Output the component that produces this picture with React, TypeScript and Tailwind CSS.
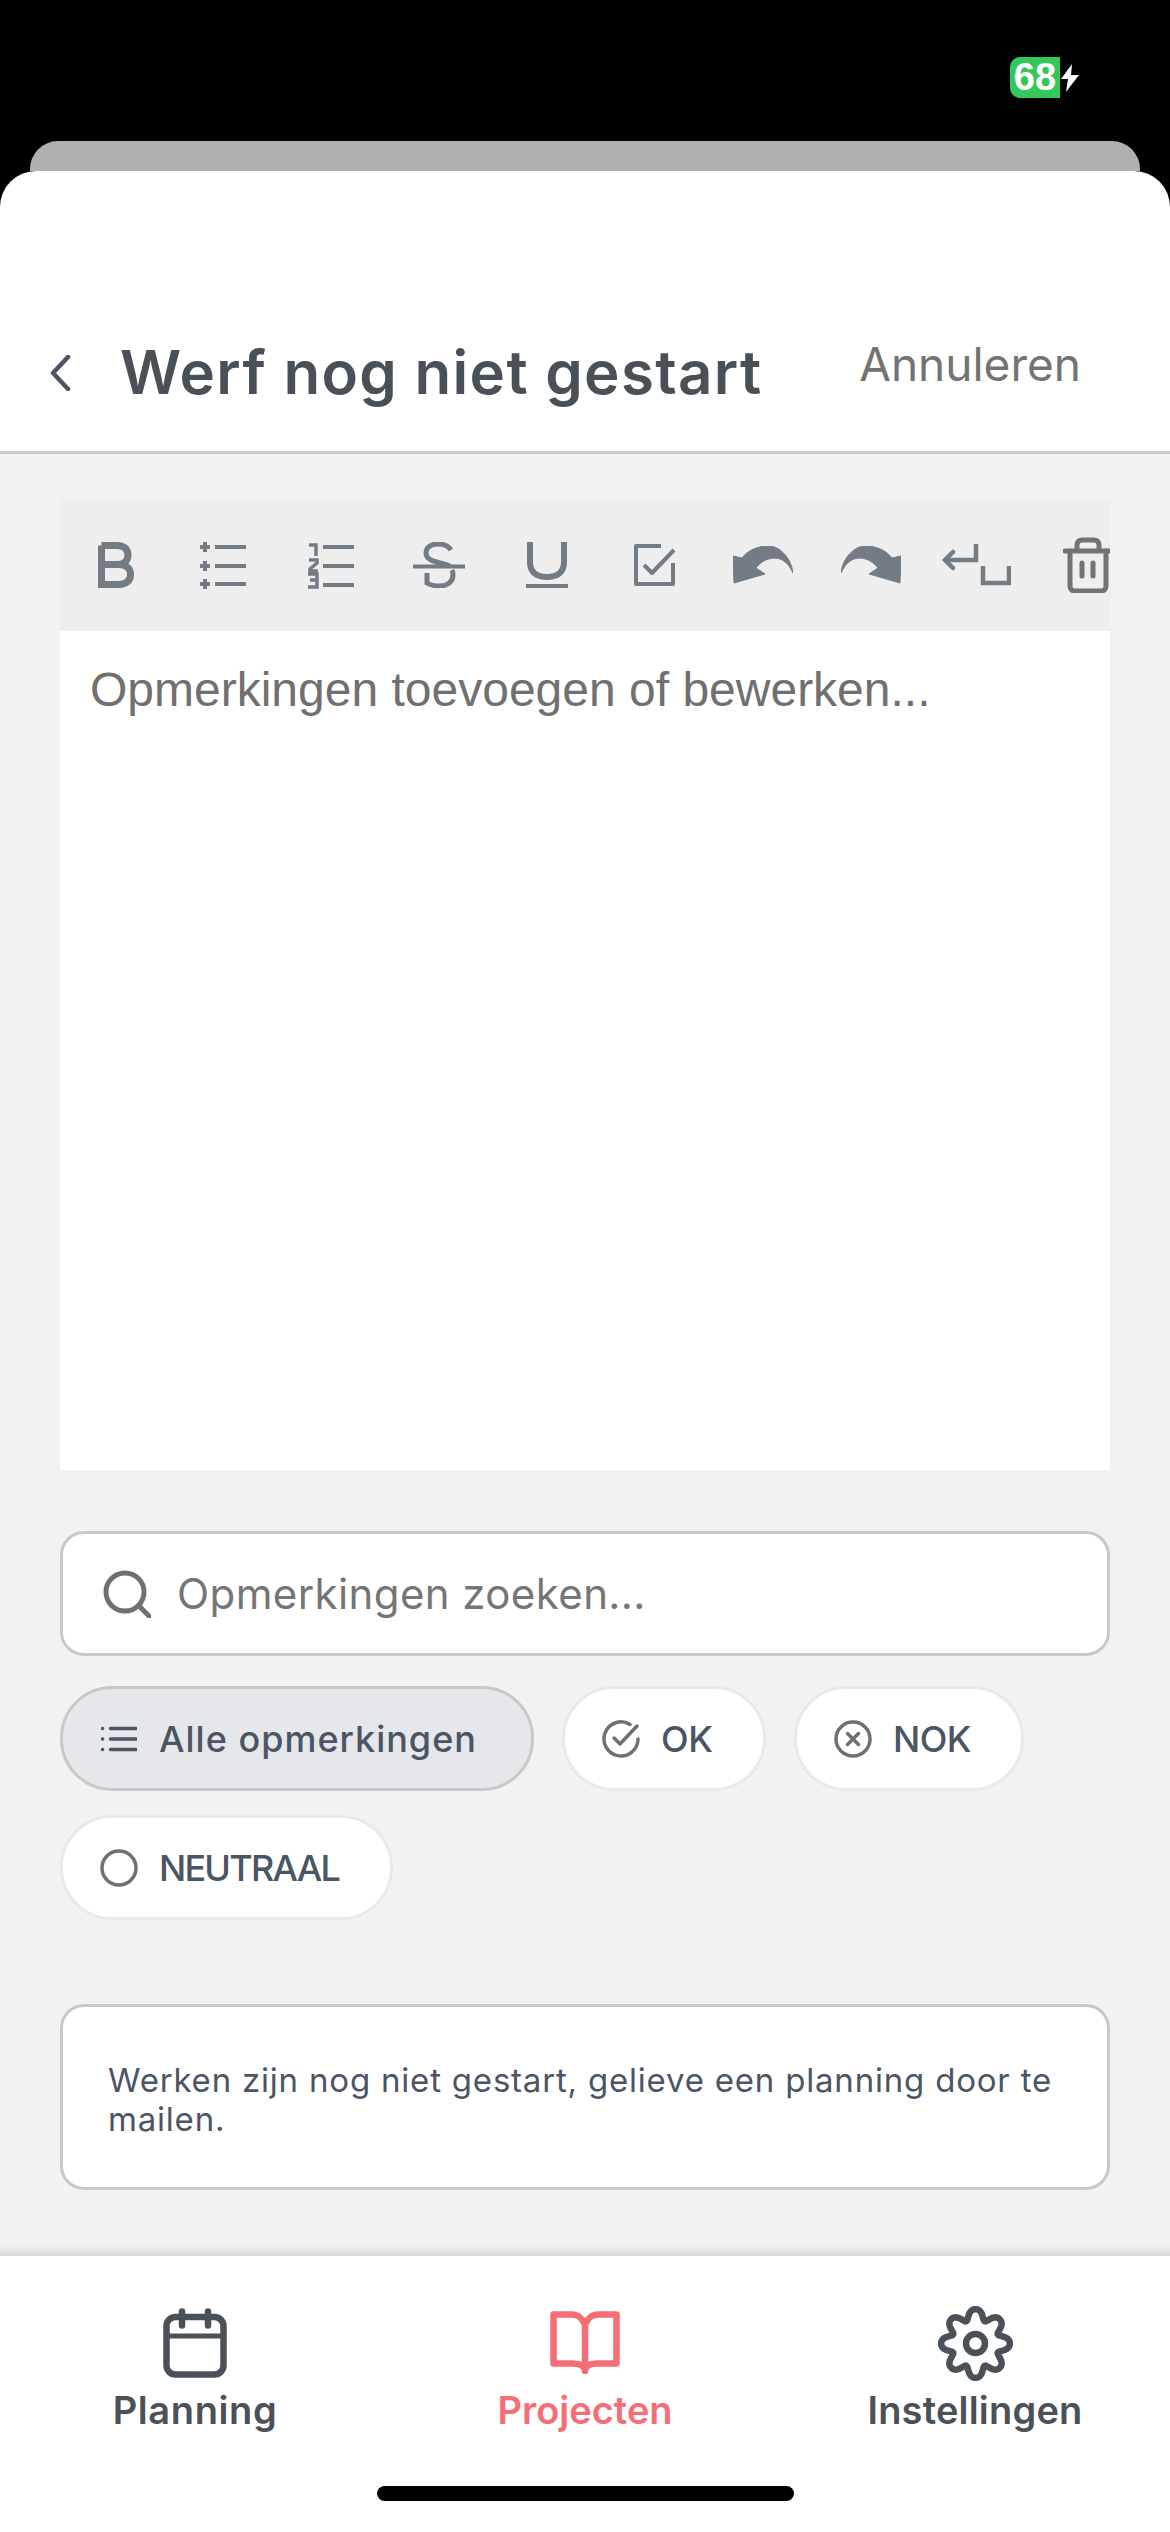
import React from 'react';

const poppinsLike = "font-['Inter','Noto_Sans',sans-serif]";

function gearPath() {
  const pts: string[] = [];
  const n = 240;
  for (let i = 0; i <= n; i++) {
    const t = (i / n) * Math.PI * 2;
    const r = 30 + 5.1 * Math.cos(8 * t) - 0.8 * Math.cos(16 * t);
    pts.push(`${(37.5 + r * Math.sin(t)).toFixed(2)} ${(37.5 - r * Math.cos(t)).toFixed(2)}`);
  }
  return 'M' + pts.join('L') + 'Z';
}

function BoldIcon() {
  return (
    <svg width="36" height="46" viewBox="0 0 36 46" fill="none" stroke="#737b84" strokeWidth="7" className="ml-[2px]">
      <path d="M3.500 3.500H19c7 0 11 3.500 11 9.500s-4 9.500-11 9.500H3.500M3.500 22.500H21c7 0 11.500 3.500 11.500 10S28 42.500 21 42.500H3.500V3.500Z" />
    </svg>
  );
}

function BulletList() {
  return (
    <svg width="46" height="47" viewBox="0 0 46 47" fill="none" stroke="#737b84" strokeWidth="4">
      {[5, 24, 42].map((y) => (
        <g key={y}>
          <path d={`M0 ${y}h10M5 ${y - 5}v10`} />
          <path d={`M15 ${y}h31`} />
        </g>
      ))}
    </svg>
  );
}

function NumberList() {
  return (
    <svg width="46" height="47" viewBox="0 0 46 47" fill="none" stroke="#737b84" strokeWidth="4">
      <path d="M1 3h7v11M1 18h8v3l-7 6v2h8M0 32h9v13H0M2 38h7" strokeWidth="3.500" />
      {[5, 24, 43].map((y) => (
        <path key={y} d={`M15 ${y}h31`} />
      ))}
    </svg>
  );
}

function StrikeIcon() {
  return (
    <svg width="52" height="46" viewBox="0 0 52 46" fill="none" stroke="#737b84" strokeWidth="5">
      <path d="M38 8C35 3 30 2 25 2c-7 0-12 3-12 9 0 9 14 9 24 13M14 31v10c4 2.500 9 3 13 3 7 0 13-4 13-11 0-2-.5-4-1-5" />
      <path d="M0 24.500h52" strokeWidth="4" />
    </svg>
  );
}

function UnderlineIcon() {
  return (
    <svg width="42" height="46" viewBox="0 0 42 46" fill="none" stroke="#737b84">
      <path d="M4 0v20c0 10 6 15 17 15s17-5 17-15V0" strokeWidth="6" />
      <path d="M0 44h42" strokeWidth="4" />
    </svg>
  );
}

function CheckboxIcon() {
  return (
    <svg width="42" height="42" viewBox="0 0 42 42" fill="none" stroke="#737b84" strokeWidth="4" strokeLinejoin="round">
      <path d="M27 2H2v38h37V19" />
      <path d="M10 21l8 8L40 6" />
    </svg>
  );
}

function UndoIcon({ flip }: { flip?: boolean }) {
  return (
    <svg width="60" height="38" viewBox="0 0 60 38" className={flip ? '-scale-x-100' : ''}>
      <path d="M0 10L1 37L32 28L23 22C30 12 50 4 60 27C58 10 45 0 36 0C25 0 15 4 9 12Z" fill="#737b84" stroke="#737b84" strokeLinejoin="round" />
    </svg>
  );
}

function ReturnIcon() {
  return (
    <svg width="69" height="42" viewBox="0 0 69 42" fill="none" stroke="#737b84" strokeWidth="4.500" className="-ml-[6px]">
      <path d="M34 0v16H3" />
      <path d="M11 8l-8 8 8 8" strokeLinecap="round" />
      <path d="M41 22v17h26V22" />
    </svg>
  );
}

function TrashIcon() {
  return (
    <svg width="49" height="56" viewBox="0 0 49 56" fill="none" stroke="#737373" strokeWidth="5" strokeLinecap="round" strokeLinejoin="round">
      <path d="M2 14h46" />
      <path d="M14 13V8c0-3 2-5 5-5h12c3 0 5 2 5 5v5" />
      <path d="M7 14v35c0 3 2 5 5 5h26c3 0 5-2 5-5V14" />
      <path d="M19 26v13M30 26v13" />
    </svg>
  );
}

function Tool({ children }: { children: React.ReactNode }) {
  return <div className="w-[108px] shrink-0 flex items-center justify-center">{children}</div>;
}

function Chip({ active, icon, label, className, labelClass }: { active?: boolean; icon: React.ReactNode; label: string; className: string; labelClass: string }) {
  return (
    <div
      className={`h-[105px] rounded-[52px] border-[3px] flex items-center pl-[37px] ${className} ${
        active ? 'bg-[#e5e7eb] border-[#c8c8c8]' : 'bg-white border-[#e8e9ed]'
      }`}
    >
      <span className="w-[38px] h-[38px] shrink-0 flex items-center justify-center">{icon}</span>
      <span className={`ml-[21px] text-[36px] font-medium text-[#4b5563] whitespace-nowrap ${labelClass} ${poppinsLike}`}>{label}</span>
    </div>
  );
}

function TabItem({ icon, label, active, labelClass }: { icon: React.ReactNode; label: string; active?: boolean; labelClass?: string }) {
  return (
    <div className="w-[390px] flex flex-col items-center">
      <div className="h-[78px] flex items-center justify-center">{icon}</div>
      <span className={`mt-[3px] text-[38px] leading-[50px] font-semibold ${labelClass ?? ''} ${poppinsLike} ${active ? 'text-[#f56e75]' : 'text-[#4b5159]'}`}>{label}</span>
    </div>
  );
}

export default function App() {
  return (
    <div className="w-[1170px] h-[2532px] bg-black flex flex-col overflow-hidden">
      {/* status bar */}
      <div className="h-[141px] shrink-0 flex justify-end pt-[57px] pr-[90px]">
        <div className="flex items-start">
          <div className="w-[50px] h-[41px] bg-[#34c759] rounded-l-[10px] flex items-center justify-center text-white text-[38px] font-bold font-['Liberation_Sans',sans-serif]">68</div>
          <svg width="20" height="28" viewBox="0 0 20 28" className="mt-[7px]">
            <path d="M12 0L1 15h7L6 28l13-17h-8z" fill="#fff" />
          </svg>
        </div>
      </div>

      {/* card behind the sheet */}
      <div className="h-[30px] shrink-0 mx-[30px] bg-[#b0b0b0] rounded-t-[28px]" />

      <div className="flex-1 bg-white rounded-t-[36px] flex flex-col overflow-hidden">
        {/* header */}
        <div className="h-[283px] shrink-0 border-b-[3px] border-[#cccccc] flex items-center pt-[122px] pl-[50px] pr-[89px]">
          <svg width="22" height="36" viewBox="0 0 22 36" fill="none" stroke="#4b5563" strokeWidth="4.500" strokeLinecap="round" strokeLinejoin="round" className="mt-[2px]">
            <path d="M18 2L3 18l15 16" />
          </svg>
          <h1 className={`ml-[48px] text-[60px] font-semibold tracking-[1.3px] text-[#4a5058] whitespace-nowrap ${poppinsLike}`}>Werf nog niet gestart</h1>
          <span className={`ml-auto -mt-[16px] text-[46px] text-[#737373] ${poppinsLike}`}>Annuleren</span>
        </div>

        {/* body */}
        <div className="flex-1 bg-[#f2f2f2] px-[60px] pt-[45px] shadow-[inset_0_-12px_10px_-10px_rgba(0,0,0,0.12)]">
          <div className="h-[132px] bg-[#eeeeee] flex overflow-hidden pl-[1px]">
            <Tool><BoldIcon /></Tool>
            <Tool><BulletList /></Tool>
            <Tool><NumberList /></Tool>
            <Tool><StrikeIcon /></Tool>
            <Tool><UnderlineIcon /></Tool>
            <Tool><CheckboxIcon /></Tool>
            <Tool><UndoIcon /></Tool>
            <Tool><UndoIcon flip /></Tool>
            <Tool><ReturnIcon /></Tool>
            <Tool><TrashIcon /></Tool>
          </div>
          <div className="h-[839px] bg-white px-[30px] pt-[30px] text-[48px] leading-[57px] text-[#707070] font-['Liberation_Sans',sans-serif]">
            Opmerkingen toevoegen of bewerken...
          </div>

          {/* search */}
          <div className="mt-[61px] h-[125px] bg-white border-[3px] border-[#c8c8c8] rounded-[24px] flex items-center pl-[40px]">
            <svg width="48" height="48" viewBox="0 0 48 48" fill="none" stroke="#707070" strokeWidth="5" strokeLinecap="round">
              <circle cx="22" cy="22" r="19" />
              <path d="M36 36l10 10" />
            </svg>
            <span className={`ml-[26px] text-[42px] text-[#757575] tracking-[0.4px] ${poppinsLike}`}>Opmerkingen zoeken...</span>
          </div>

          {/* filters */}
          <div className="mt-[30px] flex flex-wrap gap-x-[28px] gap-y-[24px]">
            <Chip
              active
              className="w-[474px]"
              labelClass="tracking-[1px]"
              label="Alle opmerkingen"
              icon={
                <svg width="36" height="28" viewBox="0 0 36 28" fill="none" stroke="#4b5563" strokeWidth="3.500" strokeLinecap="round">
                  <path d="M9.500 3.500H35M9.500 14H35M9.500 24.500H35" />
                  <path d="M1.500 3.500h.1M1.500 14h.1M1.500 24.500h.1" strokeWidth="3.500" />
                </svg>
              }
            />
            <Chip
              className="w-[204px]"
              labelClass="tracking-[-0.4px] -ml-[1px]"
              label="OK"
              icon={
                <svg width="38" height="38" viewBox="0 0 38 38" fill="none" stroke="#707070" strokeWidth="3.500" strokeLinecap="round" strokeLinejoin="round">
                  <path d="M36 19a17 17 0 1 1-8-14.500" />
                  <path d="M12 18l6 6L35 6" />
                </svg>
              }
            />
            <Chip
              className="w-[230px]"
              labelClass="tracking-[-0.6px]"
              label="NOK"
              icon={
                <svg width="38" height="38" viewBox="0 0 38 38" fill="none" stroke="#707070" strokeWidth="3.500" strokeLinecap="round">
                  <circle cx="19" cy="19" r="17" />
                  <path d="M13.500 13.500l11 11M24.500 13.500l-11 11" />
                </svg>
              }
            />
            <Chip
              className="w-[333px]"
              labelClass="tracking-[-1.8px]"
              label="NEUTRAAL"
              icon={
                <svg width="38" height="38" viewBox="0 0 38 38" fill="none" stroke="#707070" strokeWidth="3.500">
                  <circle cx="19" cy="19" r="17" />
                </svg>
              }
            />
          </div>

          {/* note */}
          <div className="mt-[84px] h-[186px] bg-white border-[3px] border-[#c8c8c8] rounded-[24px] pl-[45px] pr-[40px] pt-[54px]">
            <p className={`text-[33px] leading-[39px] tracking-[0.8px] text-[#4b5563] ${poppinsLike}`}>
              Werken zijn nog niet gestart, gelieve een planning door te mailen.
            </p>
          </div>
        </div>

        {/* tab bar */}
        <div className="h-[279px] shrink-0 bg-white border-t-[3px] border-[#dcdcdc] flex flex-col">
          <div className="flex pt-[48px]">
            <TabItem
              label="Planning"
              labelClass="tracking-[0.6px]"
              icon={
                <svg width="64" height="70" viewBox="0 0 64 70" fill="none" stroke="#4b5159" strokeWidth="6.500" strokeLinecap="round" strokeLinejoin="round">
                  <rect x="3.500" y="9" width="57" height="57.500" rx="9" />
                  <path d="M3.500 28h57" strokeWidth="5" />
                  <path d="M19 3.500v14M45 3.500v14" />
                </svg>
              }
            />
            <TabItem
              active
              label="Projecten"
              icon={
                <svg width="70" height="64" viewBox="0 0 70 64" fill="none" stroke="#f56e75" strokeWidth="6.500" strokeLinecap="round" strokeLinejoin="round">
                  <path d="M35 60V14c-2-6-7-10.500-13-10.500H3.500v49H22c6 0 13 1 13 7.500c0-6.500 7-7.500 13-7.500h18.500v-49H48c-6 0-11 4.500-13 10.500" />
                </svg>
              }
            />
            <TabItem
              label="Instellingen"
              labelClass="tracking-[0.2px]"
              icon={
                <svg width="75" height="75" viewBox="0 0 75 75" fill="none" stroke="#4b5159" strokeWidth="6.500">
                  <path d={gearPath()} />
                  <circle cx="37.500" cy="37.500" r="9.500" />
                </svg>
              }
            />
          </div>
          {/* home indicator */}
          <div className="mt-[51px] mx-auto w-[417px] h-[15px] shrink-0 rounded-full bg-black" />
        </div>
      </div>
    </div>
  );
}
